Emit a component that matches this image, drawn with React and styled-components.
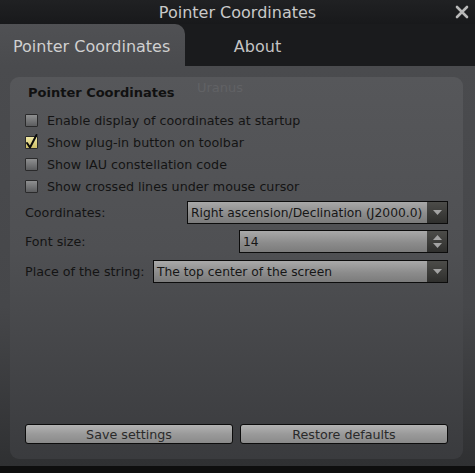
import React from "react";
import styled, { createGlobalStyle } from "styled-components";

const Global = createGlobalStyle`
  html, body { margin: 0; padding: 0; background: #0e0e0e; }
  body { font-family: "DejaVu Sans", "Liberation Sans", sans-serif; }
  * { box-sizing: border-box; }
`;

const Window = styled.div`
  width: 475px;
  height: 473px;
  display: flex;
  flex-direction: column;
  background: #0e0e0e;
  overflow: hidden;
`;

const TitleBar = styled.div`
  position: relative;
  height: 24px;
  display: flex;
  align-items: center;
  justify-content: center;
  background: linear-gradient(#202123, #18191b);
  color: #c9c9c9;
  font-size: 16px;
`;

const Close = styled.div`
  position: absolute;
  right: 6px;
  top: 5px;
  width: 14px;
  height: 14px;
  display: flex;
`;

const TabBar = styled.div`
  height: 42px;
  display: flex;
  background: #1a1b1d;
`;

const Tab = styled.div`
  width: ${(p) => p.$w}px;
  display: flex;
  align-items: center;
  justify-content: ${(p) => (p.$active ? "flex-start" : "center")};
  padding-left: ${(p) => (p.$active ? 13 : 0)}px;
  padding-top: 2px;
  font-size: 16px;
  color: ${(p) => (p.$active ? "#d0d0d0" : "#c4c4c4")};
  background: ${(p) => (p.$active ? "linear-gradient(#505154, #4a4b4e)" : "transparent")};
  border-top-right-radius: ${(p) => (p.$active ? 10 : 0)}px;
`;

const Body = styled.div`
  flex: 1;
  display: flex;
  padding: 11px 12px 7px 10px;
  background: linear-gradient(#4a4b4e, #46474a 60%, #2f3032);
`;

const Strip = styled.div`
  height: 7px;
  background: #0e0e0e;
`;

const Panel = styled.div`
  position: relative;
  flex: 1;
  display: flex;
  flex-direction: column;
  padding: 8px 15px 15px 15px;
  border-radius: 9px;
  background: linear-gradient(#56575a, #4f5053 45%, #3a3b3e);
  color: #141414;
  font-size: 12.7px;
`;

const SkyLabel = styled.div`
  position: absolute;
  left: 187px;
  top: 3px;
  color: #616265;
  font-size: 13px;
`;

const GroupTitle = styled.div`
  height: 16px;
  line-height: 16px;
  padding-left: 3px;
  font-weight: bold;
  font-size: 13px;
  color: #111;
`;

const Checks = styled.div`
  margin-top: 8px;
  display: flex;
  flex-direction: column;
`;

const CheckRow = styled.div`
  height: 22px;
  display: flex;
  align-items: center;
  gap: 9px;
`;

const Box = styled.div`
  position: relative;
  width: 13px;
  height: 13px;
  border: 1px solid #2a2a2b;
  border-radius: 1px;
  background: ${(p) =>
    p.$checked
      ? "linear-gradient(#f2eaa6, #cbbd66)"
      : "linear-gradient(#8e8f90, #5c5d5f)"};
`;

const Tick = styled.svg`
  position: absolute;
  left: -1px;
  top: -1px;
  overflow: visible;
`;

const Fields = styled.div`
  margin-top: 4px;
  display: flex;
  flex-direction: column;
`;

const FieldRow = styled.div`
  height: 23px;
  margin-top: ${(p) => p.$mt}px;
  display: flex;
  align-items: center;
  justify-content: space-between;
`;

const Combo = styled.div`
  width: ${(p) => p.$w}px;
  height: 23px;
  display: flex;
  border: 1px solid #0c0c0c;
  background: linear-gradient(#a9a9a9, #8c8c8c 55%, #7b7b7b);
`;

const ComboText = styled.div`
  flex: 1;
  padding-left: 3px;
  display: flex;
  align-items: center;
  color: #161616;
  font-size: 12.3px;
  white-space: nowrap;
  overflow: hidden;
`;

const ArrowBox = styled.div`
  width: 20px;
  display: flex;
  flex-direction: column;
  align-items: center;
  justify-content: center;
  gap: 3px;
  background: linear-gradient(#4c4c49, #2f2f2d);
`;

const Buttons = styled.div`
  margin-top: auto;
  display: grid;
  grid-template-columns: 1fr 1fr;
  gap: 7px;
`;

const Button = styled.div`
  height: 20px;
  display: flex;
  align-items: center;
  justify-content: center;
  border: 1px solid #0c0c0c;
  border-radius: 3px;
  background: linear-gradient(#b3b3b3, #9a9a9a 50%, #8a8a8a);
  color: #2a2a2a;
  font-size: 12.7px;
`;

const Down = () => (
  <svg width="9" height="5" viewBox="0 0 9 5">
    <path d="M0 0 H9 L4.5 5 Z" fill="#a3a3a3" />
  </svg>
);
const Up = () => (
  <svg width="9" height="5" viewBox="0 0 9 5">
    <path d="M0 5 H9 L4.5 0 Z" fill="#a3a3a3" />
  </svg>
);

const Check = ({ checked, children }) => (
  <CheckRow>
    <Box $checked={checked}>
      {checked && (
        <Tick width="13" height="13" viewBox="0 0 13 13">
          <path
            d="M2 7 L5 11.5 L11.5 -1"
            fill="none"
            stroke="#0a0a0a"
            strokeWidth="2"
            strokeLinecap="round"
            strokeLinejoin="round"
          />
        </Tick>
      )}
    </Box>
    <span>{children}</span>
  </CheckRow>
);

export default function App() {
  return (
    <>
      <Global />
      <Window>
        <TitleBar>
          Pointer Coordinates
          <Close>
            <svg width="14" height="14" viewBox="0 0 14 14">
              <path d="M2 2 L12 12 M12 2 L2 12" stroke="#b9b9b9" strokeWidth="2.6" strokeLinecap="round" />
            </svg>
          </Close>
        </TitleBar>
        <TabBar>
          <Tab $active $w={185}>Pointer Coordinates</Tab>
          <Tab $w={145}>About</Tab>
        </TabBar>
        <Body>
          <Panel>
            <SkyLabel>Uranus</SkyLabel>
            <GroupTitle>Pointer Coordinates</GroupTitle>
            <Checks>
              <Check>Enable display of coordinates at startup</Check>
              <Check checked>Show plug-in button on toolbar</Check>
              <Check>Show IAU constellation code</Check>
              <Check>Show crossed lines under mouse cursor</Check>
            </Checks>
            <Fields>
              <FieldRow $mt={0}>
                <span>Coordinates:</span>
                <Combo $w={261}>
                  <ComboText>Right ascension/Declination (J2000.0)</ComboText>
                  <ArrowBox><Down /></ArrowBox>
                </Combo>
              </FieldRow>
              <FieldRow $mt={6}>
                <span>Font size:</span>
                <Combo $w={209}>
                  <ComboText>14</ComboText>
                  <ArrowBox><Up /><Down /></ArrowBox>
                </Combo>
              </FieldRow>
              <FieldRow $mt={7}>
                <span>Place of the string:</span>
                <Combo $w={295}>
                  <ComboText>The top center of the screen</ComboText>
                  <ArrowBox><Down /></ArrowBox>
                </Combo>
              </FieldRow>
            </Fields>
            <Buttons>
              <Button>Save settings</Button>
              <Button>Restore defaults</Button>
            </Buttons>
          </Panel>
        </Body>
        <Strip />
      </Window>
    </>
  );
}
